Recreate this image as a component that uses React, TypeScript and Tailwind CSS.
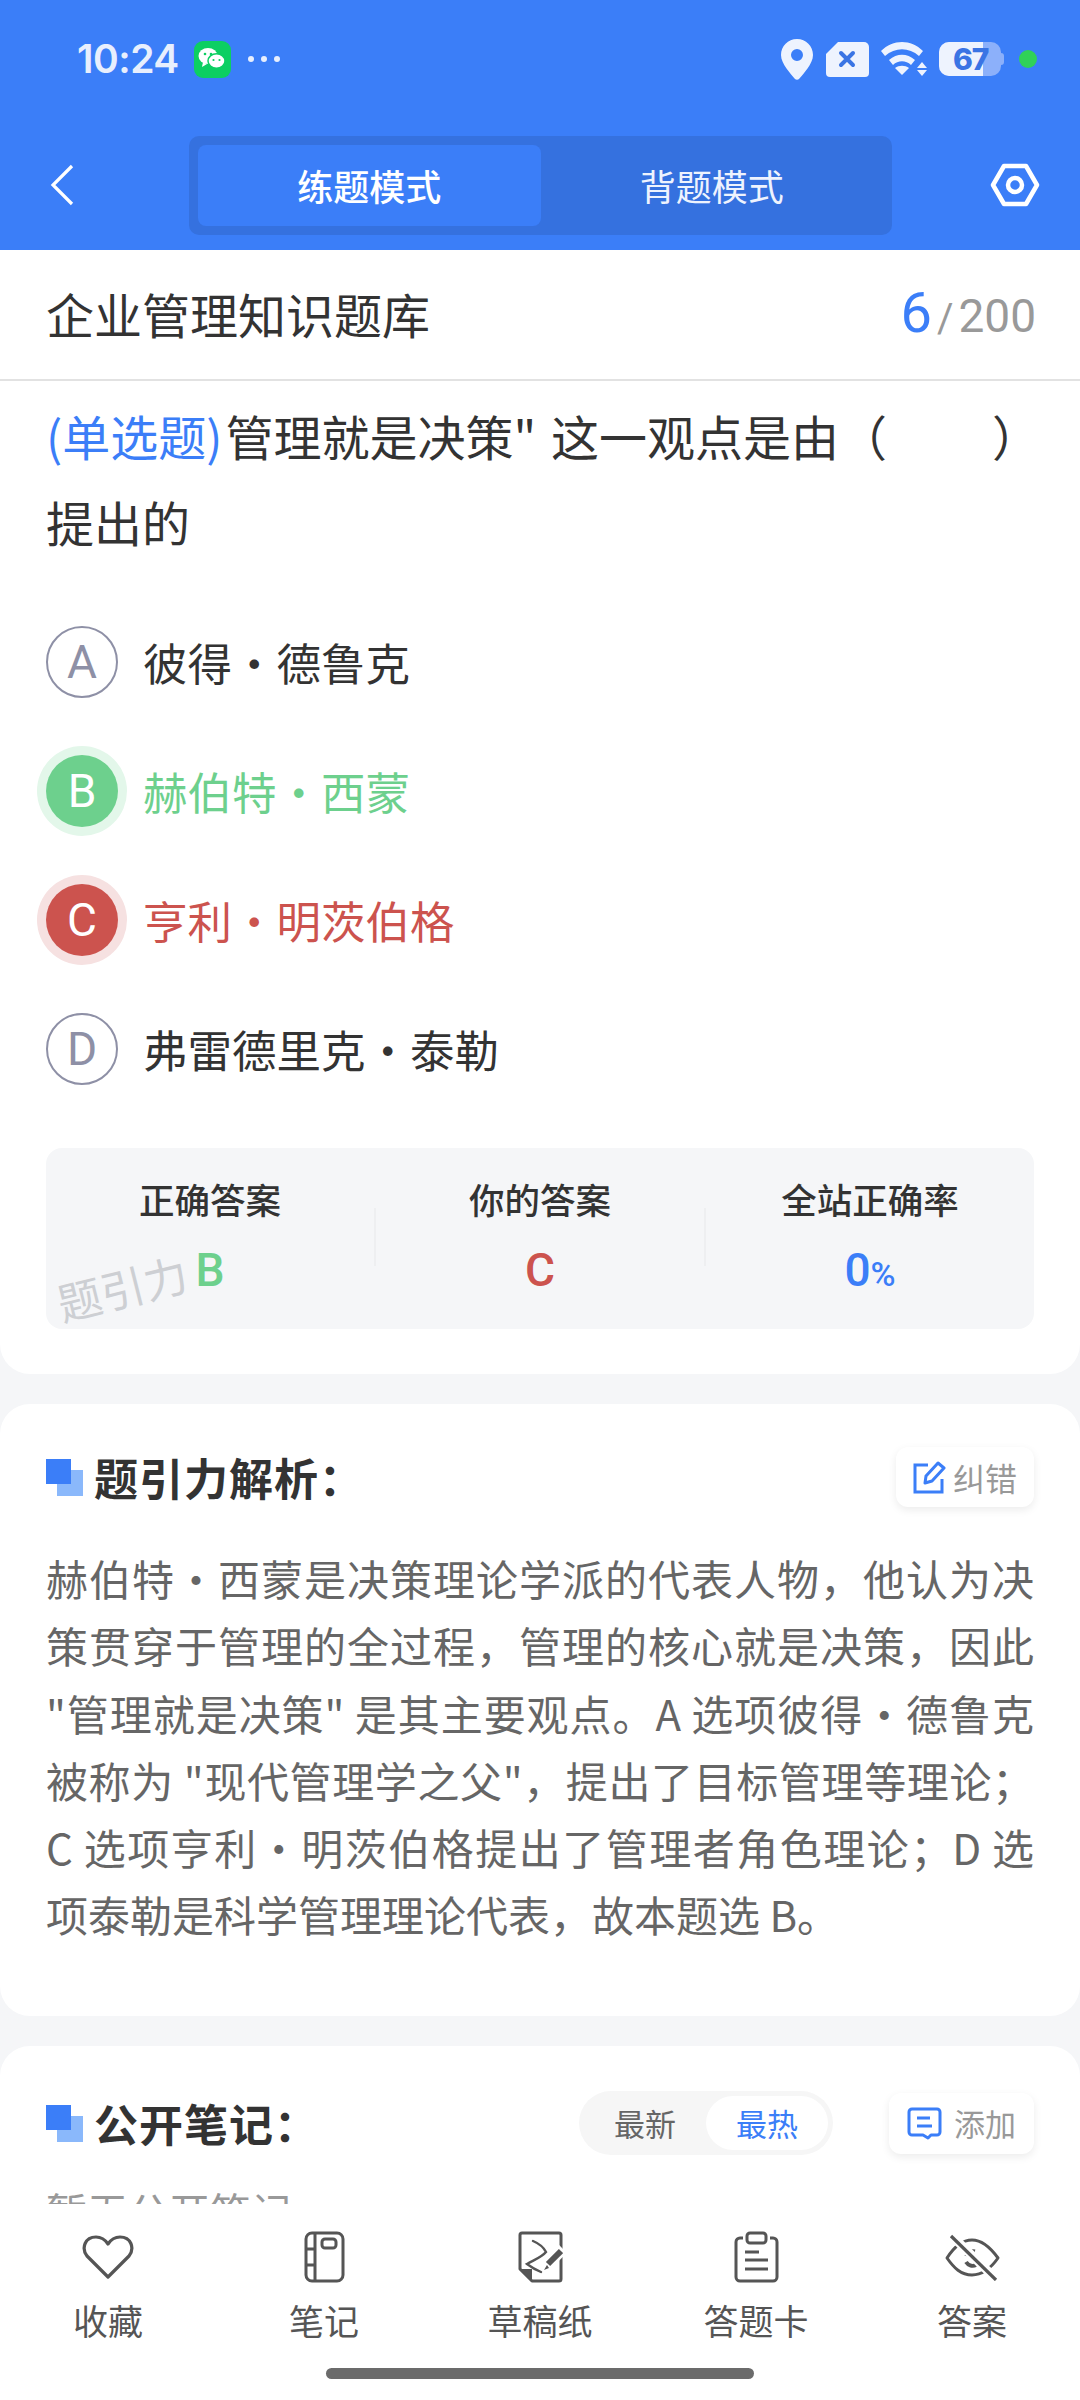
import type { ReactNode } from "react";

const explanation = [
  '赫伯特・西蒙是决策理论学派的代表人物，他认为决',
  '策贯穿于管理的全过程，管理的核心就是决策，因此',
  '"管理就是决策" 是其主要观点。A 选项彼得・德鲁克',
  '被称为 "现代管理学之父"，提出了目标管理等理论；',
  'C 选项亨利・明茨伯格提出了管理者角色理论；D 选',
];

function StatusBar() {
  return (
    <div className="h-[120px] flex items-center justify-between pl-[77px] pr-[43px] pb-[2px]">
      <div className="flex items-center">
        <span className="text-[39px] font-semibold text-[#e8effd] tracking-[-0.5px] font-['Inter']">10:24</span>
        <div className="ml-[15px] w-[37px] h-[37px] rounded-[9px] bg-[#0ccf62] flex items-center justify-center">
          <svg width="28" height="24" viewBox="0 0 28 24">
            <ellipse cx="10" cy="9" rx="9.5" ry="8" fill="#fff" />
            <path d="M5 15l-1 5 5-3z" fill="#fff" />
            <ellipse cx="18.5" cy="14" rx="8.5" ry="7.2" stroke="#0ccf62" strokeWidth="1.5" fill="#fff" />
            <circle cx="7" cy="7" r="1.3" fill="#0ccf62" />
            <circle cx="13" cy="7" r="1.3" fill="#0ccf62" />
            <circle cx="15.5" cy="13" r="1.1" fill="#0ccf62" />
            <circle cx="21.5" cy="13" r="1.1" fill="#0ccf62" />
          </svg>
        </div>
        <div className="ml-[17px] flex gap-[7px]">
          <span className="w-[6px] h-[6px] rounded-full bg-[#e8effd]" />
          <span className="w-[6px] h-[6px] rounded-full bg-[#e8effd]" />
          <span className="w-[6px] h-[6px] rounded-full bg-[#e8effd]" />
        </div>
      </div>
      <div className="flex items-center">
        <svg width="32" height="41" viewBox="0 0 32 41">
          <path fillRule="evenodd" d="M16 0C7 0 0 7 0 16c0 9 10 19 14 24 1 1 3 1 4 0 4-5 14-15 14-24C32 7 25 0 16 0zm0 10a6 6 0 110 12 6 6 0 010-12z" fill="#eef3fe" />
        </svg>
        <svg className="ml-[13px]" width="43" height="35" viewBox="0 0 43 35">
          <path d="M12 0h26a5 5 0 015 5v26a4 4 0 01-4 4H4a4 4 0 01-4-4V12z" fill="#eef3fe" />
          <path d="M15 11l12 12M27 11L15 23" stroke="#3a74e4" strokeWidth="4" strokeLinecap="round" />
        </svg>
        <svg className="ml-[12px]" width="47" height="34" viewBox="0 0 47 34">
          <path d="M0 9c12-12 30-12 42 0l-4 5c-10-9-24-9-34 0z" fill="#eef3fe" />
          <path d="M8 18c8-7 18-7 26 0l-4 5c-5-5-13-5-18 0z" fill="#eef3fe" />
          <path d="M14 26c4-3 10-3 14 0l-7 7z" fill="#eef3fe" />
          <path d="M41 20l5 6H36zM41 34l-5-6h10z" fill="#eef3fe" />
        </svg>
        <div className="ml-[11px] relative w-[62px] h-[34px] mr-[3px]">
          <div className="absolute inset-0 rounded-[10px] bg-[#8cb0fa]" />
          <div className="absolute left-0 top-0 bottom-0 w-[44px] rounded-l-[10px] bg-[#eef3fe]" />
          <div className="absolute right-[-3px] top-[11px] w-[3px] h-[12px] rounded-r bg-[#8cb0fa]" />
          <span className="absolute left-[14px] top-[-1px] text-[30px] leading-[36px] font-extrabold tracking-[-1px] text-[#3a74e4] font-['Inter']">67</span>
        </div>
        <span className="ml-[15px] w-[18px] h-[18px] rounded-full bg-[#30d158]" />
      </div>
    </div>
  );
}

function Header() {
  return (
    <div className="bg-[#3b7ef8] h-[250px]">
      <StatusBar />
      <div className="flex items-center h-[130px] pl-[50px]">
        <svg width="24" height="42" viewBox="0 0 24 42">
          <path d="M22 2L3 21l19 19" fill="none" stroke="#fff" strokeWidth="3.2" />
        </svg>
        <div className="ml-[115px] w-[703px] h-[99px] rounded-[10px] bg-[#3571df] flex p-[9px]">
          <div className="flex-1 rounded-[8px] bg-[#3b7ef8] flex items-center justify-center text-[36px] text-white font-medium">练题模式</div>
          <div className="flex-1 flex items-center justify-center text-[36px] text-[#eef3fe]">背题模式</div>
        </div>
        <svg className="ml-[98px]" width="50" height="44" viewBox="0 0 50 44">
          <path d="M14 3h22l11 19-11 19H14L3 22z" fill="none" stroke="#fff" strokeWidth="4.5" strokeLinejoin="round" />
          <circle cx="25" cy="22" r="7" fill="none" stroke="#fff" strokeWidth="4.5" />
        </svg>
      </div>
    </div>
  );
}

function Option({ letter, text, state }: { letter: string; text: string; state?: "right" | "wrong" }) {
  let badge = "w-[72px] h-[72px] border-2 border-[#8e90a6] text-[#8e90a6]";
  let color = "text-[#333333]";
  if (state === "right") {
    badge = "w-[72px] h-[72px] bg-[#6dd08d] text-white shadow-[0_0_0_9px_#e3f7ea]";
    color = "text-[#6dd08d]";
  }
  if (state === "wrong") {
    badge = "w-[72px] h-[72px] bg-[#cc534e] text-white shadow-[0_0_0_9px_#f6e1e1]";
    color = "text-[#cc534e]";
  }
  return (
    <div className="flex items-center h-[72px] mb-[57px]">
      <div className={"rounded-full flex items-center justify-center text-[46px] font-['Roboto'] " + badge}>{letter}</div>
      <div className={"ml-[25px] text-[44.5px] " + color}>{text}</div>
    </div>
  );
}

function Stat({ label, value, color }: { label: string; value: ReactNode; color: string }) {
  return (
    <div className="flex-1 flex flex-col items-center pt-[26px]">
      <div className="text-[35.5px] leading-[50px] font-medium text-[#333333]">{label}</div>
      <div className={"mt-[18px] text-[46px] leading-[56px] font-medium font-['Roboto'] " + color}>{value}</div>
    </div>
  );
}

function SectionTitle({ title }: { title: string }) {
  return (
    <div className="flex items-center">
      <div className="relative w-[37px] h-[37px]">
        <div className="absolute left-[11px] top-[11px] w-[26px] h-[26px] bg-[#8ab8fb]" />
        <div className="absolute left-0 top-0 w-[25px] h-[25px] bg-[#3b7ef8]" />
      </div>
      <div className="ml-[11px] text-[44px] leading-[64px] font-bold tracking-[1px] text-[#333333]">{title}</div>
    </div>
  );
}

function FooterItem({ label, children }: { label: string; children: ReactNode }) {
  return (
    <div className="w-[216px] flex flex-col items-center">
      <div className="h-[62px] flex items-center justify-center">{children}</div>
      <div className="mt-[7px] text-[35px] leading-[50px] text-[#555555]">{label}</div>
    </div>
  );
}

export default function App() {
  return (
    <div className="relative w-[1080px] h-[2400px] overflow-hidden bg-[#f5f6f8] font-['Noto_Sans_CJK_SC','Noto_Sans',sans-serif]">
      <Header />
      <div className="bg-white rounded-b-[30px] h-[1124px]">
        <div className="h-[131px] pl-[46px] pr-[44px] pb-[4px] flex items-center justify-between border-b-2 border-[#e2e2e2]">
          <span className="text-[48px] text-[#333333]">企业管理知识题库</span>
          <span className="flex items-baseline font-['Roboto'] text-[46px] text-[#999999]">
            <span className="text-[56px] text-[#3b7ef8]">6</span>
            <span className="ml-[5px] mr-[5px] text-[40px]">/</span>200
          </span>
        </div>
        <div className="px-[46px]">
          <div className="mt-[11px] text-[48px] leading-[86px] text-[#333333] whitespace-nowrap [word-spacing:4px]">
            <span className="text-[#3b7ef8]">(单选题)</span>
            <span className="ml-[3px]">管理就是决策" 这一观点是由（<span className="inline-block w-[105px]" />）</span>
            <br />
            提出的
          </div>
          <div className="mt-[62px]">
            <Option letter="A" text="彼得・德鲁克" />
            <Option letter="B" text="赫伯特・西蒙" state="right" />
            <Option letter="C" text="亨利・明茨伯格" state="wrong" />
            <Option letter="D" text="弗雷德里克・泰勒" />
          </div>
          <div className="relative mt-[63px] h-[181px] rounded-[16px] bg-[#f5f6f8] flex">
            <Stat label="正确答案" value="B" color="text-[#6dd08d]" />
            <div className="mt-[60px] h-[58px] w-[2px] bg-[#eeeff1]" />
            <Stat label="你的答案" value="C" color="text-[#cc534e]" />
            <div className="mt-[60px] h-[58px] w-[2px] bg-[#eeeff1]" />
            <Stat label="全站正确率" value={<>0<span className="text-[34px]">%</span></>} color="text-[#3b7ef8]" />
            <div className="absolute left-[10px] top-[109px] text-[44px] leading-[60px] text-[#cdcfd3] -rotate-[14deg]">题引力</div>
          </div>
        </div>
      </div>
      <div className="mt-[30px] bg-white rounded-[30px] h-[612px] px-[46px] pt-[41px]">
        <div className="flex items-center justify-between">
          <SectionTitle title="题引力解析：" />
          <div className="w-[138px] h-[60px] rounded-[12px] bg-white shadow-[0_3px_8px_rgba(0,0,0,0.08)] flex items-center justify-center">
            <svg width="33" height="33" viewBox="0 0 33 33">
              <path d="M15 4H2v27h27V18" fill="none" stroke="#3b7ef8" strokeWidth="3" />
              <path d="M12 22l1-7L25 2l6 5-12 13z" fill="none" stroke="#3b7ef8" strokeWidth="3" strokeLinejoin="round" />
            </svg>
            <span className="ml-[7px] text-[32px] text-[#999999]">纠错</span>
          </div>
        </div>
        <div className="mt-[35px] text-[42px] leading-[67.3px] text-[#666666]">
          {explanation.map((line) => (
            <div key={line} className="text-justify [text-align-last:justify]">
              {line}
            </div>
          ))}
          <div>项泰勒是科学管理理论代表，故本题选 B。</div>
        </div>
      </div>
      <div className="mt-[30px] bg-white rounded-t-[30px] h-[300px] px-[46px] pt-[45px]">
        <div className="flex items-center justify-between">
          <SectionTitle title="公开笔记：" />
          <div className="flex items-center">
            <div className="w-[254px] h-[64px] rounded-full bg-[#f6f6f6] flex items-center p-[5px]">
              <div className="flex-1 text-center text-[31px] text-[#666666]">最新</div>
              <div className="w-[122px] h-[54px] rounded-full bg-white flex items-center justify-center text-[31px] text-[#3b7ef8]">最热</div>
            </div>
            <div className="ml-[56px] w-[145px] h-[61px] rounded-[12px] bg-white shadow-[0_3px_8px_rgba(0,0,0,0.08)] flex items-center justify-center">
              <svg width="35" height="33" viewBox="0 0 35 33">
                <path d="M5 2h25a3 3 0 013 3v20a3 3 0 01-3 3h-6l-3 3-5-3H5a3 3 0 01-3-3V5a3 3 0 013-3z" fill="none" stroke="#3b7ef8" strokeWidth="3" strokeLinejoin="round" />
                <path d="M10 11h13M10 19h15" stroke="#3b7ef8" strokeWidth="3" />
              </svg>
              <span className="ml-[12px] text-[31px] text-[#999999]">添加</span>
            </div>
          </div>
        </div>
        <div className="mt-[22px] text-[41px] leading-[66px] text-[#999999]">暂无公开笔记</div>
      </div>
      {/* bottom bar sits on top of the scrolling notes */}
      <div className="absolute left-0 right-0 bottom-0 h-[196px] bg-white">
        <div className="flex pt-[22px]">
          <FooterItem label="收藏">
            <svg width="52" height="46" viewBox="0 0 52 46">
              <path d="M26 43L5 22C-1 14 3 3 14 3c6 0 10 4 12 7 2-3 6-7 12-7 11 0 15 11 9 19z" fill="none" stroke="#555555" strokeWidth="3.2" strokeLinejoin="round" />
            </svg>
          </FooterItem>
          <FooterItem label="笔记">
            <svg width="41" height="52" viewBox="0 0 41 52">
              <rect x="2" y="2" width="37" height="48" rx="6" fill="none" stroke="#555555" strokeWidth="3" />
              <path d="M11 2v48M2 18h9M2 34h9" stroke="#555555" strokeWidth="3" />
              <rect x="18" y="8" width="14" height="9" rx="3" fill="none" stroke="#555555" strokeWidth="3" />
            </svg>
          </FooterItem>
          <FooterItem label="草稿纸">
            <svg width="45" height="52" viewBox="0 0 45 52">
              <path d="M4 2h37a2 2 0 012 2v44a2 2 0 01-2 2H14L2 38V4a2 2 0 012-2z" fill="none" stroke="#555555" strokeWidth="3" strokeLinejoin="round" />
              <path d="M2 38l12 0v12z" fill="#555555" />
              <path d="M15 10c7 3 11 7 13 11-4 5-12 8-19 12 4 3 9 6 14 8" fill="none" stroke="#555555" strokeWidth="2.4" strokeLinecap="round" />
              <path d="M45 18L28 35" stroke="#fff" strokeWidth="11" />
              <path d="M43 20L30 33" stroke="#555555" strokeWidth="6" />
              <path d="M29 34l-3 5 5-2z" fill="#555555" />
            </svg>
          </FooterItem>
          <FooterItem label="答题卡">
            <svg width="45" height="52" viewBox="0 0 45 52">
              <path d="M9 7H6a4 4 0 00-4 4v35a4 4 0 004 4h33a4 4 0 004-4V11a4 4 0 00-4-4h-3" fill="none" stroke="#555555" strokeWidth="3" />
              <rect x="13" y="2" width="19" height="10" rx="3" fill="none" stroke="#555555" strokeWidth="3" />
              <path d="M11 21h14M11 29h23M11 38h23" stroke="#555555" strokeWidth="3" />
            </svg>
          </FooterItem>
          <FooterItem label="答案">
            <svg width="57" height="47" viewBox="0 0 57 47">
              <path d="M3 24C10 13 18 6 28 6s18 7 26 18c-7 10-15 17-26 17S10 34 3 24z" fill="none" stroke="#555555" strokeWidth="3" strokeLinejoin="round" />
              <path d="M22 28c2 3 6 5 10 3" fill="none" stroke="#555555" strokeWidth="4" />
              <path d="M22 22c1-4 5-6 9-5" fill="none" stroke="#555555" strokeWidth="3" />
              <path d="M7 1l46 45" stroke="#fff" strokeWidth="9" />
              <path d="M7 2l45 44" stroke="#555555" strokeWidth="3.2" />
            </svg>
          </FooterItem>
        </div>
        <div className="absolute left-[326px] bottom-[21px] w-[428px] h-[11px] rounded-full bg-[#6b6b6b]" />
      </div>
    </div>
  );
}
